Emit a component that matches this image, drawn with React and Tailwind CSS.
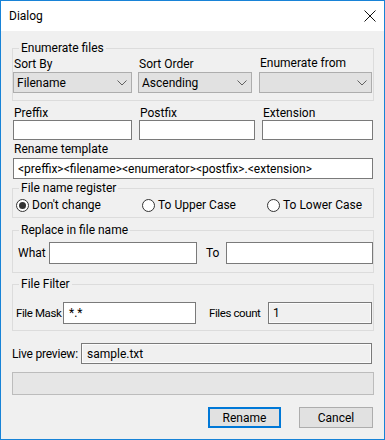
const font = { fontFamily: 'Roboto, "Liberation Sans", Arial, sans-serif' };

const Chevron = () => (
  <svg width="10" height="6" viewBox="0 0 10 6" className="shrink-0">
    <path d="M0.5 0.5 L5 5 L9.5 0.5" fill="none" stroke="#606060" strokeWidth="1" />
  </svg>
);

const Combo = ({ value, className = "" }) => (
  <div
    className={`flex h-[21px] items-center justify-between border border-[#adadad] bg-[#e1e1e1] pl-[3px] pr-[4px] ${className}`}
  >
    <span className="leading-[14px]">{value}</span>
    <Chevron />
  </div>
);

const TextBox = ({ value = "", className = "" }) => (
  <div className={`flex shrink-0 items-center border border-[#7a7a7a] bg-white pl-[3px] ${className}`}>
    <span className="whitespace-nowrap leading-[14px]">{value}</span>
  </div>
);

const ReadBox = ({ value = "", className = "" }) => (
  <div className={`flex shrink-0 items-center border border-[#7a7a7a] bg-[#f0f0f0] pl-[4px] shadow-[inset_0_0_0_1px_#fbfbfb] ${className}`}>
    <span className="whitespace-nowrap leading-[14px]">{value}</span>
  </div>
);

const Group = ({ title, children, className = "" }) => (
  <fieldset className={`shrink-0 border border-[#dcdcdc] ${className}`}>
    <legend className="ml-[6px] px-[2px] leading-[16px]">{title}</legend>
    {children}
  </fieldset>
);

const Radio = ({ label, checked, className = "" }) => (
  <div className={`flex items-center ${className}`}>
    <span className="flex h-[13px] w-[13px] items-center justify-center rounded-full border border-[#333] bg-white">
      {checked && <span className="h-[7px] w-[7px] rounded-full bg-[#333]" />}
    </span>
    <span className="ml-[3px] leading-[16px]">{label}</span>
  </div>
);

export default function App() {
  return (
    <div
      className="flex h-[440px] w-[385px] flex-col whitespace-nowrap border border-[#1883d7] text-[12px] text-black"
      style={font}
    >
      <div className="flex h-[30px] shrink-0 items-center justify-between bg-white pl-[8px] pr-[8px]">
        <span className="leading-[16px]">Dialog</span>
        <svg width="12" height="12" viewBox="0 0 12 12">
          <path d="M0.5 0.5 L11.5 11.5 M11.5 0.5 L0.5 11.5" stroke="#111" strokeWidth="1" />
        </svg>
      </div>

      <div className="flex flex-1 flex-col bg-[#f0f0f0] pl-[11px] pr-[10px]">
        <Group title="Enumerate files" className="mt-[9px] pb-[7px]">
          <div className="flex">
            <div className="flex w-[119px] flex-col">
              <span className="pl-[1px] leading-[16px]">Sort By</span>
              <Combo value="Filename" />
            </div>
            <div className="ml-[6px] flex w-[114px] flex-col">
              <span className="pl-[1px] leading-[16px]">Sort Order</span>
              <Combo value="Ascending" />
            </div>
            <div className="ml-[7px] flex w-[113px] flex-col">
              <span className="mb-[2px] pl-[1px] leading-[14px]">Enumerate from</span>
              <Combo value="" />
            </div>
          </div>
        </Group>

        <div className="mt-[5px] flex shrink-0 pl-[1px]">
          <div className="flex w-[119px] flex-col">
            <span className="pl-[1px] leading-[14px]">Preffix</span>
            <TextBox className="h-[20px]" />
          </div>
          <div className="ml-[7px] flex w-[116px] flex-col">
            <span className="pl-[1px] leading-[14px]">Postfix</span>
            <TextBox className="h-[20px]" />
          </div>
          <div className="ml-[7px] flex w-[111px] flex-col">
            <span className="pl-[1px] leading-[14px]">Extension</span>
            <TextBox className="h-[20px]" />
          </div>
        </div>

        <span className="mt-[2px] shrink-0 pl-[2px] leading-[14px]">Rename template</span>
        <TextBox
          className="ml-[1px] mr-[1px] mt-[2px] h-[21px] pl-[4px]"
          value="<preffix><filename><enumerator><postfix>.<extension>"
        />

        <Group title="File name register" className="mt-[1px] pb-[3px]">
          <div className="flex h-[18px] items-center">
            <Radio label="Don't change" checked className="ml-[3px] w-[126px]" />
            <Radio label="To Upper Case" className="w-[125px]" />
            <Radio label="To Lower Case" />
          </div>
        </Group>

        <Group title="Replace in file name" className="mt-[4px] pb-[8px] pt-[4px]">
          <div className="flex items-center">
            <span className="ml-[5px] w-[31px] leading-[16px]">What</span>
            <TextBox className="h-[22px] w-[148px]" />
            <span className="ml-[9px] w-[20px] leading-[16px]">To</span>
            <TextBox className="h-[22px] w-[147px]" />
          </div>
        </Group>

        <Group title="File Filter" className="mt-[3px] pb-[6px] pt-[10px]">
          <div className="flex items-center">
            <span className="ml-[3px] w-[47px] text-[11.5px] leading-[16px] tracking-[-0.4px]">File Mask</span>
            <TextBox className="h-[22px] w-[133px] pl-[5px]" value="*.*" />
            <span className="ml-[13px] w-[59px] text-[11.5px] leading-[16px] tracking-[-0.4px]">Files count</span>
            <ReadBox className="h-[22px] w-[104px]" value="1" />
          </div>
        </Group>

        <div className="mt-[12px] flex shrink-0 items-center">
          <span className="w-[69px] leading-[16px] tracking-[-0.2px]">Live preview:</span>
          <ReadBox className="h-[21px] w-[291px] pl-[5px]" value="sample.txt" />
        </div>

        <div className="mt-[8px] h-[23px] shrink-0 border border-[#bcbcbc] bg-[#e6e6e6]" />

        <div className="mt-[12px] flex shrink-0 justify-end pr-[1px]">
          <button className="flex h-[21px] w-[73px] items-center justify-center border-2 border-[#0078d7] bg-[#e1e1e1] leading-[14px]">
            Rename
          </button>
          <button className="ml-[18px] flex h-[21px] w-[74px] items-center justify-center border border-[#adadad] bg-[#e1e1e1] leading-[14px]">
            Cancel
          </button>
        </div>
      </div>
    </div>
  );
}
